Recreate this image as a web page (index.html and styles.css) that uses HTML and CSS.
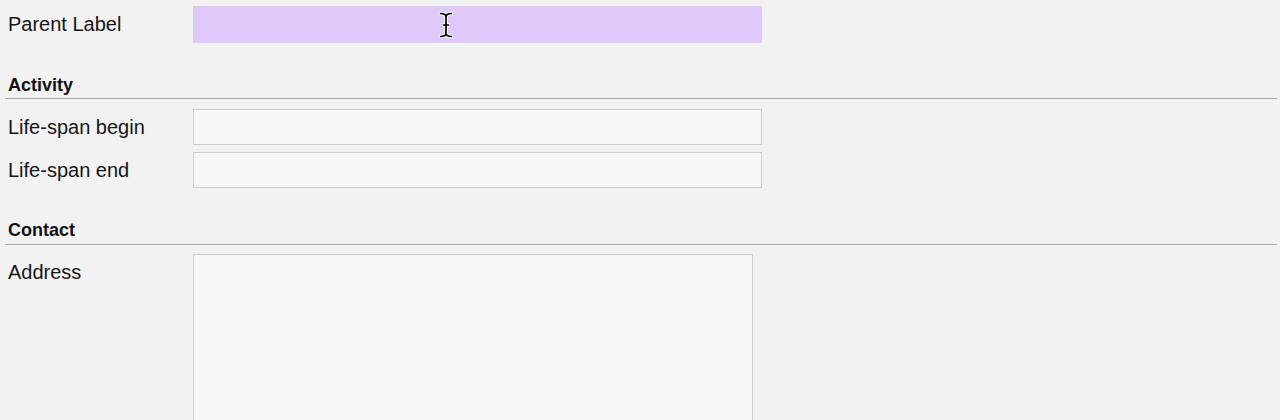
FILE: index.html
```html
<!DOCTYPE html>
<html>
<head>
<meta charset="utf-8">
<link rel="stylesheet" href="styles.css">
</head>
<body>
<form class="page">
  <div class="row first">
    <label class="label">Parent Label</label>
    <div class="field-wrap">
      <div class="input focus"></div>
      <svg class="cursor" width="16" height="28" viewBox="0 0 16 28">
        <path d="M2.5 2.5 Q8 2.5 8 6 Q8 2.5 13.5 2.5 M8 6 V22 M2.5 25.5 Q8 25.5 8 22 Q8 25.5 13.5 25.5 M5.5 14 H10.5" fill="none" stroke="#fff" stroke-width="3.6" stroke-linecap="round"/>
        <path d="M2.5 2.5 Q8 2.5 8 6 Q8 2.5 13.5 2.5 M8 6 V22 M2.5 25.5 Q8 25.5 8 22 Q8 25.5 13.5 25.5 M5.5 14 H10.5" fill="none" stroke="#000" stroke-width="1.7" stroke-linecap="round"/>
      </svg>
    </div>
  </div>

  <h3 class="section">Activity</h3>
  <div class="row">
    <label class="label">Life-span begin</label>
    <div class="input"></div>
  </div>
  <div class="row second">
    <label class="label">Life-span end</label>
    <div class="input"></div>
  </div>

  <h3 class="section contact">Contact</h3>
  <div class="row area-row">
    <label class="label">Address</label>
    <div class="textarea"></div>
  </div>
</form>
</body>
</html>
```

FILE: styles.css
```css
html, body {
  margin: 0;
  padding: 0;
  background: #f2f2f2;
  height: 420px;
  overflow: hidden;
}
body {
  font-family: "Liberation Sans", Arial, Helvetica, sans-serif;
  color: #161616;
}
.page {
  margin: 0 3px 0 5px;
  display: flex;
  flex-direction: column;
}
.row {
  display: flex;
  align-items: center;
  margin-top: 10px;
}
.row.first { margin-top: 6px; }
.row.second { margin-top: 7px; }
.label {
  width: 188px;
  padding-left: 3px;
  padding-bottom: 1px;
  box-sizing: border-box;
  font-size: 20px;
  line-height: 24px;
  flex: none;
}
.field-wrap {
  position: relative;
}
.input {
  width: 569px;
  height: 36px;
  box-sizing: border-box;
  border: 1px solid #cdcdcd;
  background: #f7f7f7;
}
.input.focus {
  height: 37px;
  border: none;
  background: #dfc9fb;
}
.cursor {
  position: absolute;
  left: 245px;
  top: 5px;
}
.section {
  margin: 32px 0 0 0;
  padding: 0 0 3px 3px;
  font-size: 18px;
  line-height: 20px;
  font-weight: bold;
  color: #111;
  border-bottom: 1px solid #a9a9a9;
}
.section.contact { margin-top: 32px; padding-bottom: 4px; }
.area-row {
  align-items: flex-start;
  margin-top: 9px;
}
.area-row .label {
  padding-top: 6px;
}
.textarea {
  width: 560px;
  height: 170px;
  box-sizing: border-box;
  border: 1px solid #cdcdcd;
  border-bottom: none;
  background: #f7f7f7;
}
```
